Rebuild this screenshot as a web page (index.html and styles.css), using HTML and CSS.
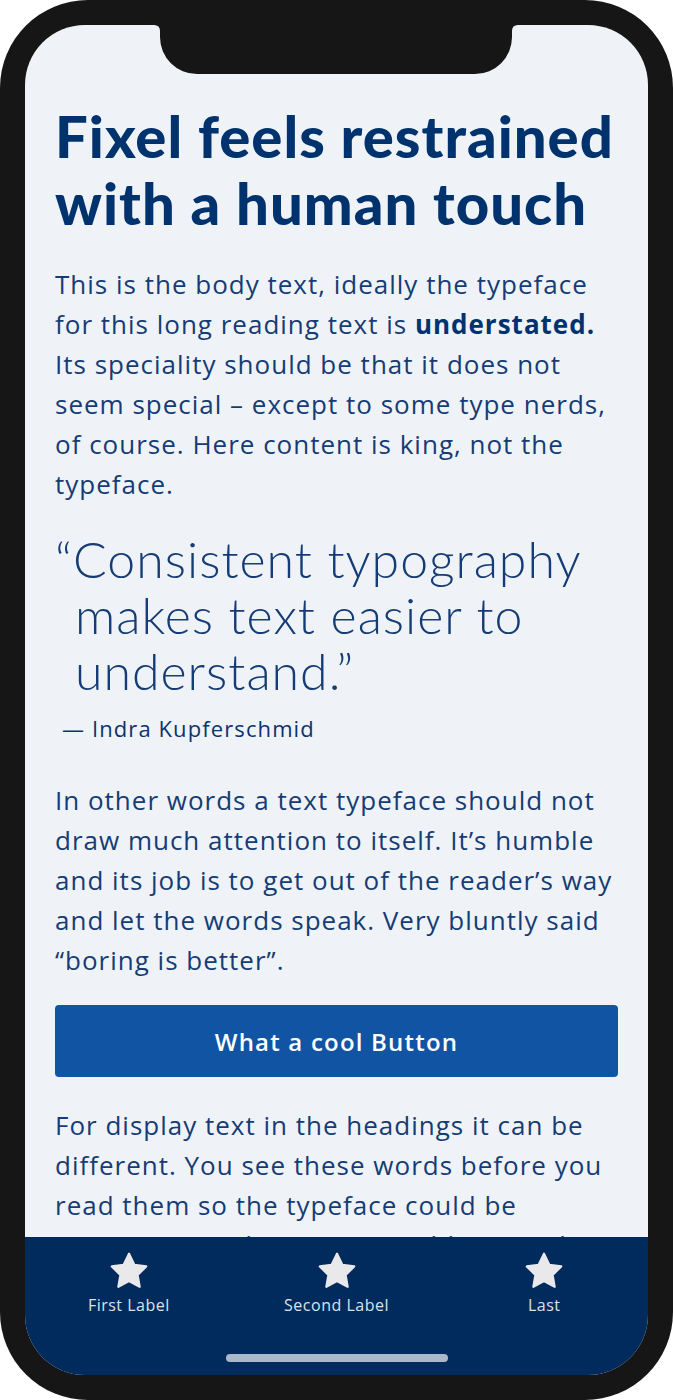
FILE: index.html
```html
<!DOCTYPE html>
<html lang="en">
<head>
<meta charset="utf-8">
<title>Fixel</title>
<link rel="stylesheet" href="styles.css">
</head>
<body>
<div class="phone">
  <div class="screen">
    <svg class="notch" width="364" height="49" viewBox="0 0 364 49" aria-hidden="true">
      <path d="M0 0 H364 Q358 0 358 6 V12 A37 37 0 0 1 321 49 H43 A37 37 0 0 1 6 12 V6 Q6 0 0 0 Z" fill="#161616"/>
    </svg>
    <main class="content">
      <h1 class="title">Fixel feels restrained with a human touch</h1>
      <p class="body-text">This is the body text, ideally the typeface for this long reading text is <strong>understated.</strong> Its speciality should be that it does not seem special – except to some type nerds, of course. Here content is king, not the typeface.</p>
      <blockquote class="quote">
        <p class="quote-text">“Consistent typography makes text easier to understand.”</p>
        <cite class="quote-author">— Indra Kupferschmid</cite>
      </blockquote>
      <p class="body-text after-quote">In other words a text typeface should not draw much attention to itself. It’s humble and its job is to get out of the reader’s way and let the words speak. Very bluntly said “boring is better”.</p>
      <button class="cta" type="button">What a cool Button</button>
      <p class="body-text after-button">For display text in the headings it can be different. You see these words before you read them so the typeface could be interesting and attention grabbing. So be</p>
    </main>
    <nav class="tabbar">
      <div class="tabs">
        <a class="tab">
          <svg class="star" viewBox="0 0 24 24" aria-hidden="true"><polygon points="12,2.6 14.9,8.6 21.4,9.5 16.7,14.1 17.8,20.6 12,17.5 6.2,20.6 7.3,14.1 2.6,9.5 9.1,8.6" fill="#e9e9eb" stroke="#e9e9eb" stroke-width="1.2" stroke-linejoin="round"/></svg>
          <span class="tab-label">First Label</span>
        </a>
        <a class="tab">
          <svg class="star" viewBox="0 0 24 24" aria-hidden="true"><polygon points="12,2.6 14.9,8.6 21.4,9.5 16.7,14.1 17.8,20.6 12,17.5 6.2,20.6 7.3,14.1 2.6,9.5 9.1,8.6" fill="#e9e9eb" stroke="#e9e9eb" stroke-width="1.2" stroke-linejoin="round"/></svg>
          <span class="tab-label">Second Label</span>
        </a>
        <a class="tab">
          <svg class="star" viewBox="0 0 24 24" aria-hidden="true"><polygon points="12,2.6 14.9,8.6 21.4,9.5 16.7,14.1 17.8,20.6 12,17.5 6.2,20.6 7.3,14.1 2.6,9.5 9.1,8.6" fill="#e9e9eb" stroke="#e9e9eb" stroke-width="1.2" stroke-linejoin="round"/></svg>
          <span class="tab-label">Last</span>
        </a>
      </div>
      <div class="home-indicator"></div>
    </nav>
  </div>
</div>
</body>
</html>
```

FILE: styles.css
```css
* { box-sizing: border-box; }

html, body {
  margin: 0;
  padding: 0;
  background: #ffffff;
}

.phone {
  width: 673px;
  height: 1400px;
  background: #161616;
  border-radius: 88px;
  padding: 25px;
}

.screen {
  position: relative;
  height: 1350px;
  background: #eff3f8;
  border-radius: 60px;
  overflow: hidden;
  display: flex;
  flex-direction: column;
}

.notch {
  position: absolute;
  top: 0;
  left: 129px;
  display: block;
}

.content {
  flex: 1;
  overflow: hidden;
  padding: 77px 30px 0 30px;
  font-family: "Open Sans", "Noto Sans", sans-serif;
  color: #153c74;
}

.title {
  margin: 0;
  font-family: "Lato", sans-serif;
  font-weight: 900;
  font-size: 58px;
  line-height: 67px;
  letter-spacing: 1px;
  color: #00336e;
}

.body-text {
  margin: 28px 0 0 0;
  font-size: 26px;
  line-height: 40px;
  letter-spacing: 1px;
}

.body-text strong {
  font-weight: 700;
  color: #00336e;
}

.quote {
  margin: 27px 0 0 0;
  padding: 0;
}

.quote-text {
  margin: 0;
  padding-left: 20px;
  text-indent: -20px;
  font-family: "Lato", sans-serif;
  font-weight: 300;
  font-size: 50px;
  line-height: 56px;
  letter-spacing: 1px;
  color: #153c74;
}

.quote-author {
  display: block;
  margin: 14px 0 0 7px;
  font-family: "Open Sans", sans-serif;
  font-style: normal;
  font-weight: 400;
  font-size: 22px;
  line-height: 30px;
  letter-spacing: 1.1px;
  color: #0c336a;
}

.after-quote { margin-top: 37px; }

.cta {
  display: block;
  width: 100%;
  height: 72px;
  margin: 25px 0 0 0;
  border: 0;
  border-radius: 4px;
  background: #1254a4;
  color: #ffffff;
  font-family: "Open Sans", sans-serif;
  font-weight: 600;
  font-size: 24px;
  letter-spacing: 1.2px;
}

.after-button { margin-top: 28px; }

.tabbar {
  height: 138px;
  background: #022b5d;
  display: flex;
  flex-direction: column;
  align-items: center;
}

.tabs {
  width: 100%;
  display: flex;
  padding-top: 12px;
}

.tab {
  flex: 1;
  display: flex;
  flex-direction: column;
  align-items: center;
}

.star {
  width: 44px;
  height: 44px;
  display: block;
}

.tab-label {
  margin-top: 2px;
  font-family: "Open Sans", sans-serif;
  font-size: 16px;
  line-height: 20px;
  letter-spacing: 0.5px;
  color: #dde1e8;
}

.home-indicator {
  margin-top: 39px;
  width: 222px;
  height: 8px;
  border-radius: 4px;
  background: #aab9ca;
}
```
